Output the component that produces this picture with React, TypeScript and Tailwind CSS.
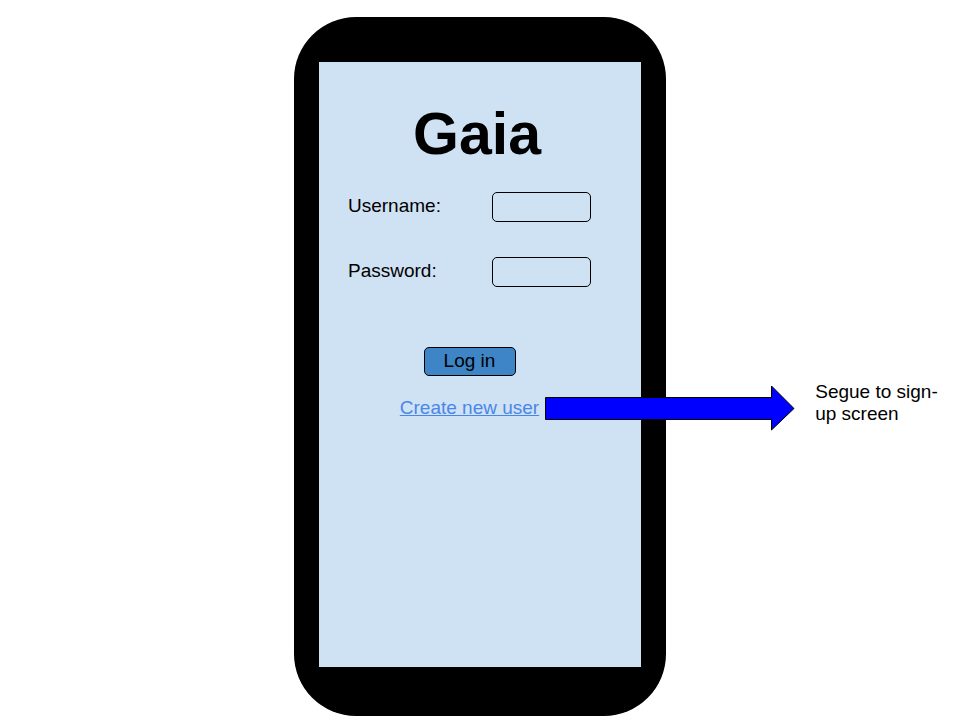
import React from "react";

function Field({ id, label, type }: { id: string; label: string; type: string }) {
  return (
    <div className="flex items-start justify-between">
      <label htmlFor={id} className="pt-[3px]">
        {label}
      </label>
      <input
        id={id}
        type={type}
        className="h-[30px] w-[99px] rounded-[5px] border border-black bg-transparent px-2 outline-none"
      />
    </div>
  );
}

function SegueNote() {
  return (
    <div className="absolute top-1/2 left-full flex -translate-y-1/2 items-center">
      <svg width="250" height="46" viewBox="0 0 250 46" className="ml-[6px] shrink-0" aria-hidden="true">
        <path
          d="M0.5 12.5H226.5V1L249 23.5L226.5 45V34.5H0.5Z"
          fill="#0000ff"
          stroke="#000"
          strokeWidth="1"
        />
      </svg>
      <p className="mb-2.5 ml-5 w-[130px]">Segue to sign-up screen</p>
    </div>
  );
}

export default function App() {
  return (
    <main className="flex min-h-screen justify-center bg-white pt-[17px] pb-1 font-['Liberation_Sans',Arial,sans-serif] text-[19px] leading-[22px] text-black">
      <section className="flex w-[372px] flex-col rounded-[62px] bg-black px-[25px] pt-[45px] pb-[49px]">
        <div className="flex grow flex-col bg-[#cfe2f3] pt-[41px]">
          <h1 className="pr-1.5 text-center text-[59px] leading-[62px] font-bold">Gaia</h1>
          <form
            className="mt-[27px] flex flex-col pr-[50px] pl-[29px]"
            onSubmit={(event) => event.preventDefault()}
          >
            <div className="flex flex-col gap-[35px]">
              <Field id="username" label="Username:" type="text" />
              <Field id="password" label="Password:" type="password" />
            </div>
            <button
              type="submit"
              className="mt-[60px] flex h-[29px] w-[92px] items-start justify-center self-center rounded-[5px] border border-black bg-[#3d85c6] pt-[2px]"
            >
              Log in
            </button>
            <div className="relative mt-[21px] self-center">
              <a href="#sign-up" className="whitespace-nowrap text-[#4a86e8] underline">
                Create new user
              </a>
              <SegueNote />
            </div>
          </form>
        </div>
      </section>
    </main>
  );
}
